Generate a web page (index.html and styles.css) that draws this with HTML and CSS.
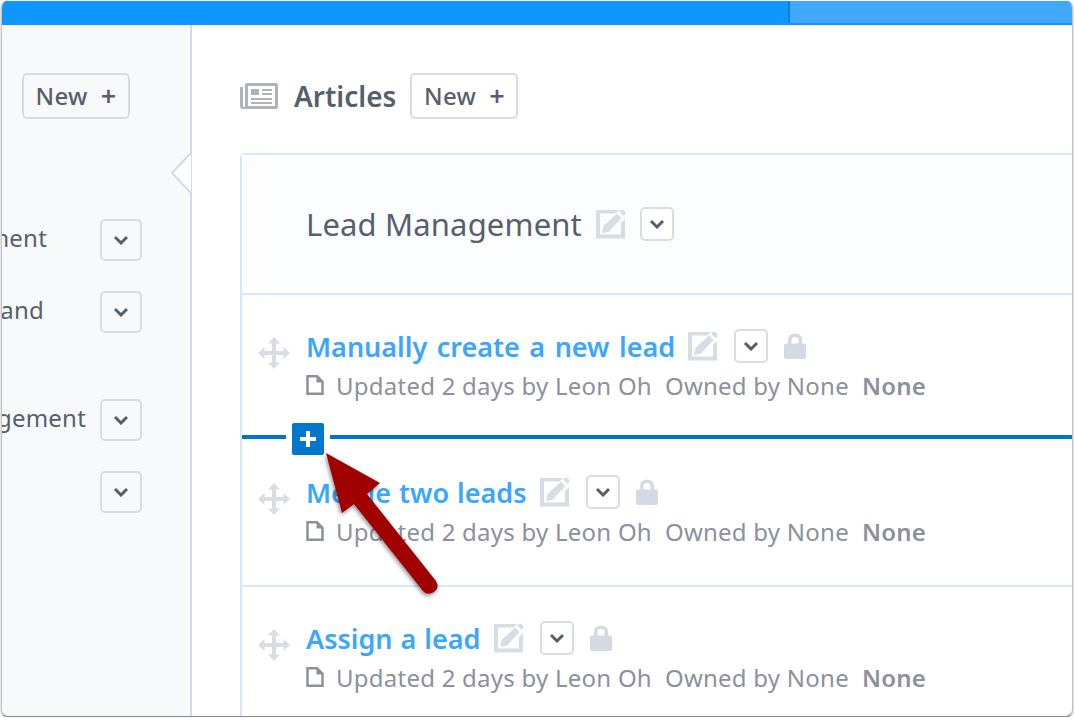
FILE: index.html
```html
<!DOCTYPE html>
<html lang="en">
<head>
  <meta charset="UTF-8">
  <meta name="viewport" content="width=device-width, initial-scale=1.0">
  <title>Articles</title>
  <link rel="stylesheet" href="styles.css">
</head>
<body>
  <svg class="defs" width="0" height="0">
    <symbol id="i-edit" viewBox="0 0 30 30">
      <path d="M0 1h23l-3.500 3.500H4v21h21V14l4-4v19.500H0z"/>
      <path d="M6 24l1.500-7L21 4.500l4.500 4.500L13 22.500z"/>
      <path d="M23 2.500l1.500-1.500q1.500-1 3 0l1.500 1.500q1 1.500 0 3L27.500 7z"/>
    </symbol>
    <symbol id="i-move" viewBox="0 0 32 32">
      <path d="M16 0l6 6.500h-4v7.500h7.500v-4l6.500 6-6.500 6v-4H18v7.500h4L16 32l-6-6.500h4V18H6.500v4L0 16l6.500-6v4H14V6.500h-4z"/>
    </symbol>
    <symbol id="i-lock" viewBox="0 0 22 26">
      <path d="M0 12.500q0-2 2-2h2V7q0-6.500 7-6.500T18 7v3.500h2q2 0 2 2V24q0 2-2 2H2q-2 0-2-2zM7.500 10.500h7V7q0-3-3.500-3T7.500 7z" fill-rule="evenodd"/>
    </symbol>
    <symbol id="i-file" viewBox="0 0 18 20">
      <path d="M1.500 1.200h9.500l5.500 5.500v12.100h-15z" fill="none" stroke="currentColor" stroke-width="2.500"/>
      <path d="M10.500 1.500l6 6h-6z" fill="currentColor"/>
    </symbol>
    <symbol id="i-caret" viewBox="0 0 16 10">
      <path d="M2 2l6 6 6-6" fill="none" stroke="currentColor" stroke-width="3"/>
    </symbol>
  </svg>

  <div class="window">
    <div class="topbar"><div class="topbar-done"></div><div class="topbar-rest"></div></div>

    <div class="layout">
      <aside class="sidebar">
        <div class="sidebar-head">
          <button class="btn-new"><span>New</span> <span class="plus">+</span></button>
        </div>
        <svg class="notch" viewBox="0 0 22 44"><path d="M21 1L2 21l19 20" fill="#fff" stroke="#d3dae4" stroke-width="2"/></svg>
        <ul class="side-list">
          <li class="side-row"><span class="side-label w-a">Management</span><button class="btn-caret big"><svg><use href="#i-caret"/></svg></button></li>
          <li class="side-row"><span class="side-label w-b">Demand</span><button class="btn-caret big"><svg><use href="#i-caret"/></svg></button></li>
          <li class="side-row section"><span class="side-label w-c">Management</span><button class="btn-caret big"><svg><use href="#i-caret"/></svg></button></li>
          <li class="side-row"><span class="side-label w-d"></span><button class="btn-caret big"><svg><use href="#i-caret"/></svg></button></li>
        </ul>
      </aside>

      <main class="main">
        <div class="main-head">
          <svg class="news-icon" viewBox="0 0 38 26">
            <path d="M5 2q0-2 2-2h29q2 0 2 2v22q0 2-2 2H3q-3 0-3-3V4h3v19q0 1 1 1t1-1zM8 3v20h27V3z" fill-rule="evenodd"/>
            <path d="M11 6h8v6h-8zM22 6h10v2h-10zM22 10h10v2h-10zM11 15h21v2H11zM11 19h21v2H11z"/>
          </svg>
          <h1 class="main-title">Articles</h1>
          <button class="btn-new"><span>New</span> <span class="plus">+</span></button>
        </div>

        <section class="card">
          <header class="card-head">
            <h2 class="card-title">Lead Management</h2>
            <svg class="icon-edit"><use href="#i-edit"/></svg>
            <button class="btn-caret"><svg><use href="#i-caret"/></svg></button>
          </header>

          <article class="row">
            <svg class="icon-move"><use href="#i-move"/></svg>
            <div class="row-body">
              <div class="row-title">
                <a class="row-link">Manually create a new lead</a>
                <svg class="icon-edit"><use href="#i-edit"/></svg>
                <button class="btn-caret"><svg><use href="#i-caret"/></svg></button>
                <svg class="icon-lock"><use href="#i-lock"/></svg>
              </div>
              <div class="row-meta">
                <svg class="icon-file"><use href="#i-file"/></svg>
                <span>Updated 2 days by Leon Oh</span>
                <span>Owned by None</span>
                <b>None</b>
              </div>
            </div>
          </article>

          <div class="drop-line">
            <span class="drop-seg start"></span>
            <button class="drop-add">
              <svg viewBox="0 0 16 16"><path d="M6 0h4v6h6v4h-6v6H6v-6H0V6h6z"/></svg>
            </button>
            <span class="drop-seg"></span>
          </div>

          <article class="row after-drop">
            <svg class="icon-move"><use href="#i-move"/></svg>
            <div class="row-body">
              <div class="row-title">
                <a class="row-link">Merge two leads</a>
                <svg class="icon-edit"><use href="#i-edit"/></svg>
                <button class="btn-caret"><svg><use href="#i-caret"/></svg></button>
                <svg class="icon-lock"><use href="#i-lock"/></svg>
              </div>
              <div class="row-meta">
                <svg class="icon-file"><use href="#i-file"/></svg>
                <span>Updated 2 days by Leon Oh</span>
                <span>Owned by None</span>
                <b>None</b>
              </div>
            </div>
          </article>

          <article class="row lined">
            <svg class="icon-move"><use href="#i-move"/></svg>
            <div class="row-body">
              <div class="row-title">
                <a class="row-link">Assign a lead</a>
                <svg class="icon-edit"><use href="#i-edit"/></svg>
                <button class="btn-caret"><svg><use href="#i-caret"/></svg></button>
                <svg class="icon-lock"><use href="#i-lock"/></svg>
              </div>
              <div class="row-meta">
                <svg class="icon-file"><use href="#i-file"/></svg>
                <span>Updated 2 days by Leon Oh</span>
                <span>Owned by None</span>
                <b>None</b>
              </div>
            </div>
          </article>
        </section>
      </main>
    </div>

    <!-- annotation arrow -->
    <svg class="callout" viewBox="0 0 130 160">
      <path d="M6 3L60 33 47 44 116 131Q120 138 114 142 107 146 103 141L34 54 22 63z" fill="#a00000"/>
    </svg>
  </div>
</body>
</html>
```

FILE: styles.css
```css
/* General styles */
* {
  box-sizing: border-box;
}

body {
  margin: 0;
  background: #fff;
  font-family: "Noto Sans", "Open Sans", sans-serif;
  color: #575f6d;
}

.defs {
  position: absolute;
}

button {
  font-family: inherit;
  padding: 0;
  cursor: pointer;
}

.window {
  position: relative;
  width: 1072px;
  height: 717px;
  margin: 0 0 0 1px;
  border: 1px solid #c4c4c4;
  border-top: 0;
  border-bottom-color: #8a8a8a;
  border-radius: 8px;
  overflow: hidden;
  display: flex;
  flex-direction: column;
  background: #fff;
  box-shadow: 0 1px 2px rgba(0, 0, 0, 0.4);
}

/* Progress bar */
.topbar {
  flex: 0 0 24px;
  display: flex;
  margin: 1px -1px 0;
  border-bottom: 2px solid #0f96ff;
}

.topbar-done {
  width: 789px;
  background: #0f96ff;
  border-right: 2px solid #0c7fd8;
}

.topbar-rest {
  flex: 1;
  background: #40a9ff;
}

.layout {
  flex: 1;
  display: flex;
  min-height: 0;
}

/* Sidebar */
.sidebar {
  position: relative;
  flex: 0 0 190px;
  background: #f8f9fb;
  border-right: 2px solid #d3dae4;
}

.sidebar-head {
  padding: 48px 0 0 20px;
}

.notch {
  position: absolute;
  top: 127px;
  right: -2px;
  width: 22px;
  height: 44px;
}

.side-list {
  list-style: none;
  margin: 100px 0 0;
  padding: 0 48px 0 0;
}

.side-row {
  display: flex;
  justify-content: space-between;
  align-items: center;
  height: 42px;
  margin-bottom: 30px;
  font-size: 24px;
  letter-spacing: 0.2px;
}

.side-row.section {
  margin-top: 66px;
}

.side-label {
  display: flex;
  justify-content: flex-end;
  white-space: nowrap;
  padding-bottom: 6px;
}

.w-a { width: 45px; }
.w-b { width: 42px; }
.w-c { width: 84px; }
.w-d { width: 0; }

/* Buttons */
.btn-new {
  display: inline-flex;
  align-items: center;
  justify-content: center;
  gap: 13px;
  width: 108px;
  height: 46px;
  padding-bottom: 1px;
  background: #fff;
  border: 2px solid #d9dce1;
  border-radius: 5px;
  color: #575f6d;
  font-size: 24px;
  font-weight: 500;
  letter-spacing: 0.3px;
}

.sidebar .btn-new {
  background: #f8f9fb;
}

.plus {
  font-size: 27px;
  font-weight: 600;
  line-height: 1;
}

.btn-caret {
  flex: none;
  display: inline-flex;
  align-items: center;
  justify-content: center;
  width: 34px;
  height: 34px;
  background: #fff;
  border: 2px solid #d9dce1;
  border-radius: 5px;
  color: #575f6d;
}

.btn-caret svg {
  width: 16px;
  height: 10px;
}

.btn-caret.big {
  width: 42px;
  height: 42px;
  background: #f8f9fb;
}

/* Main column */
.main {
  flex: 1;
  min-width: 0;
  padding: 48px 0 0 48px;
}

.main-head {
  display: flex;
  align-items: center;
  height: 46px;
}

.news-icon {
  width: 38px;
  height: 26px;
  fill: #b0b3ba;
  margin-right: 16px;
}

.main-title {
  margin: 0 14px 0 0;
  font-size: 28px;
  font-weight: 600;
}

/* Card */
.card {
  width: 1000px;
  margin-top: 34px;
  border: 2px solid #d4e8fa;
  border-radius: 5px 0 0 0;
}

.card-head {
  display: flex;
  align-items: center;
  height: 140px;
  padding-left: 64px;
  background: #fcfdfe;
  border-bottom: 2px solid #d4e8fa;
}

.card-title {
  margin: 0 14px 0 0;
  font-size: 31px;
  font-weight: 400;
  letter-spacing: 0.15px;
}

.icon-edit {
  flex: none;
  width: 30px;
  height: 30px;
  fill: #d6dde5;
  margin-right: 16px;
}

.card-head .icon-edit {
  margin-right: 14px;
}

.row {
  display: flex;
  align-items: flex-start;
  height: 140px;
  padding: 32px 0 0 16px;
}

.row.after-drop {
  height: 146px;
  padding-top: 34px;
}

.row.lined {
  height: 146px;
  padding-top: 32px;
  border-top: 2px solid #d4e8fa;
}

.icon-move {
  flex: none;
  width: 32px;
  height: 32px;
  fill: #d6dde5;
  margin: 10px 16px 0 0;
}

.row-title {
  display: flex;
  align-items: center;
  height: 38px;
}

.row-link {
  margin-right: 13px;
  color: #3ba6ff;
  font-size: 27px;
  font-weight: 600;
  word-spacing: 2.5px;
  white-space: nowrap;
}

.after-drop .row-link,
.lined .row-link {
  word-spacing: 1px;
}

.icon-lock {
  flex: none;
  width: 22px;
  height: 26px;
  margin-left: 16px;
  fill: #d3dae4;
}

.row-meta {
  display: flex;
  align-items: center;
  gap: 13px;
  height: 40px;
  color: #8c919b;
  font-size: 24px;
  letter-spacing: 0.24px;
  white-space: nowrap;
}

.row-meta b {
  font-weight: 600;
}

.icon-file {
  flex: none;
  width: 18px;
  height: 20px;
  margin-right: -1px;
}

/* Insert line */
.drop-line {
  display: flex;
  align-items: center;
  height: 4px;
}

.drop-seg {
  flex: 1;
  height: 4px;
  background: #0077cc;
}

.drop-seg.start {
  flex: 0 0 44px;
}

.drop-add {
  flex: none;
  display: flex;
  align-items: center;
  justify-content: center;
  width: 32px;
  height: 32px;
  margin: 4px 6px 0 6px;
  background: #0077cc;
  border: 0;
  border-radius: 2px;
  position: relative;
  z-index: 1;
}

.drop-add svg {
  width: 16px;
  height: 16px;
  fill: #fff;
}

/* Arrow on top of the screenshot */
.callout {
  position: absolute;
  left: 318px;
  top: 450px;
  width: 130px;
  height: 160px;
  filter: drop-shadow(-1px 2px 2px rgba(0, 0, 0, 0.45));
}
```
